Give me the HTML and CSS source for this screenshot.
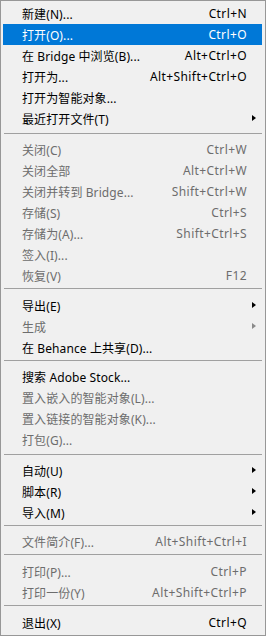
FILE: index.html
```html
<!DOCTYPE html>
<html lang="zh-CN">
<head>
    <meta charset="UTF-8">
    <title>文件</title>
    <link rel="stylesheet" href="styles.css">
</head>
<body>

<div class="menu">
    <div class="item"><span class="label">新建(N)...</span><span class="key">Ctrl+N</span></div>
    <div class="item active"><span class="label">打开(O)...</span><span class="key">Ctrl+O</span></div>
    <div class="item"><span class="label">在 Bridge 中浏览(B)...</span><span class="key">Alt+Ctrl+O</span></div>
    <div class="item"><span class="label">打开为...</span><span class="key">Alt+Shift+Ctrl+O</span></div>
    <div class="item"><span class="label">打开为智能对象...</span></div>
    <div class="item sub"><span class="label">最近打开文件(T)</span></div>
    <div class="sep wide"></div>

    <div class="item off"><span class="label">关闭(C)</span><span class="key">Ctrl+W</span></div>
    <div class="item off"><span class="label">关闭全部</span><span class="key">Alt+Ctrl+W</span></div>
    <div class="item off"><span class="label">关闭并转到 Bridge...</span><span class="key">Shift+Ctrl+W</span></div>
    <div class="item off"><span class="label">存储(S)</span><span class="key">Ctrl+S</span></div>
    <div class="item off"><span class="label">存储为(A)...</span><span class="key">Shift+Ctrl+S</span></div>
    <div class="item off"><span class="label">签入(I)...</span></div>
    <div class="item off"><span class="label">恢复(V)</span><span class="key">F12</span></div>
    <div class="sep"></div>

    <div class="item sub"><span class="label">导出(E)</span></div>
    <div class="item sub off"><span class="label">生成</span></div>
    <div class="item"><span class="label">在 Behance 上共享(D)...</span></div>
    <div class="sep tight"></div>

    <div class="item"><span class="label">搜索 Adobe Stock...</span></div>
    <div class="item off"><span class="label">置入嵌入的智能对象(L)...</span></div>
    <div class="item off"><span class="label">置入链接的智能对象(K)...</span></div>
    <div class="item off"><span class="label">打包(G)...</span></div>
    <div class="sep wide"></div>

    <div class="item sub"><span class="label">自动(U)</span></div>
    <div class="item sub"><span class="label">脚本(R)</span></div>
    <div class="item sub"><span class="label">导入(M)</span></div>
    <div class="sep tight"></div>

    <div class="item off"><span class="label">文件简介(F)...</span><span class="key">Alt+Shift+Ctrl+I</span></div>
    <div class="sep"></div>

    <div class="item off"><span class="label">打印(P)...</span><span class="key">Ctrl+P</span></div>
    <div class="item off"><span class="label">打印一份(Y)</span><span class="key">Alt+Shift+Ctrl+P</span></div>
    <div class="sep"></div>

    <div class="item"><span class="label">退出(X)</span><span class="key">Ctrl+Q</span></div>
</div>

</body>
</html>
```

FILE: styles.css
```css
body {
    margin: 0;
    padding: 0;
    background-color: #f0f0f0;
    font-family: "Noto Sans", "Noto Sans CJK SC", sans-serif;
    font-size: 12px;
}

.menu {
    width: 266px;
    height: 636px;
    box-sizing: border-box;
    padding: 2px 3px 2px 2px;
    background-color: #f0f0f0;
    border: 1px solid #979797;
}

.item {
    position: relative;
    display: flex;
    align-items: center;
    justify-content: space-between;
    height: 21px;
    padding: 0 15px 0 19px;
    color: #000;
    white-space: nowrap;
}

.label {
    letter-spacing: 0.1px;
}

.key {
    letter-spacing: 0.4px;
}

.item.active {
    background-color: #0078d7;
    color: #fff;
}

.item.off {
    color: #6d6d6d;
}

/* submenu arrow */
.item.sub::after {
    content: "";
    position: absolute;
    right: 6px;
    top: 7px;
    border-top: 3.5px solid transparent;
    border-bottom: 3.5px solid transparent;
    border-left: 4px solid #000;
}

.item.sub.off::after {
    border-left-color: #8a8a8a;
}

.sep {
    height: 1px;
    margin: 2px 0 6px 1px;
    background-color: #a0a0a0;
}

.sep.wide {
    margin-top: 4px;
    margin-bottom: 5px;
}

.sep.tight {
    margin-top: 2px;
    margin-bottom: 5px;
}
```
